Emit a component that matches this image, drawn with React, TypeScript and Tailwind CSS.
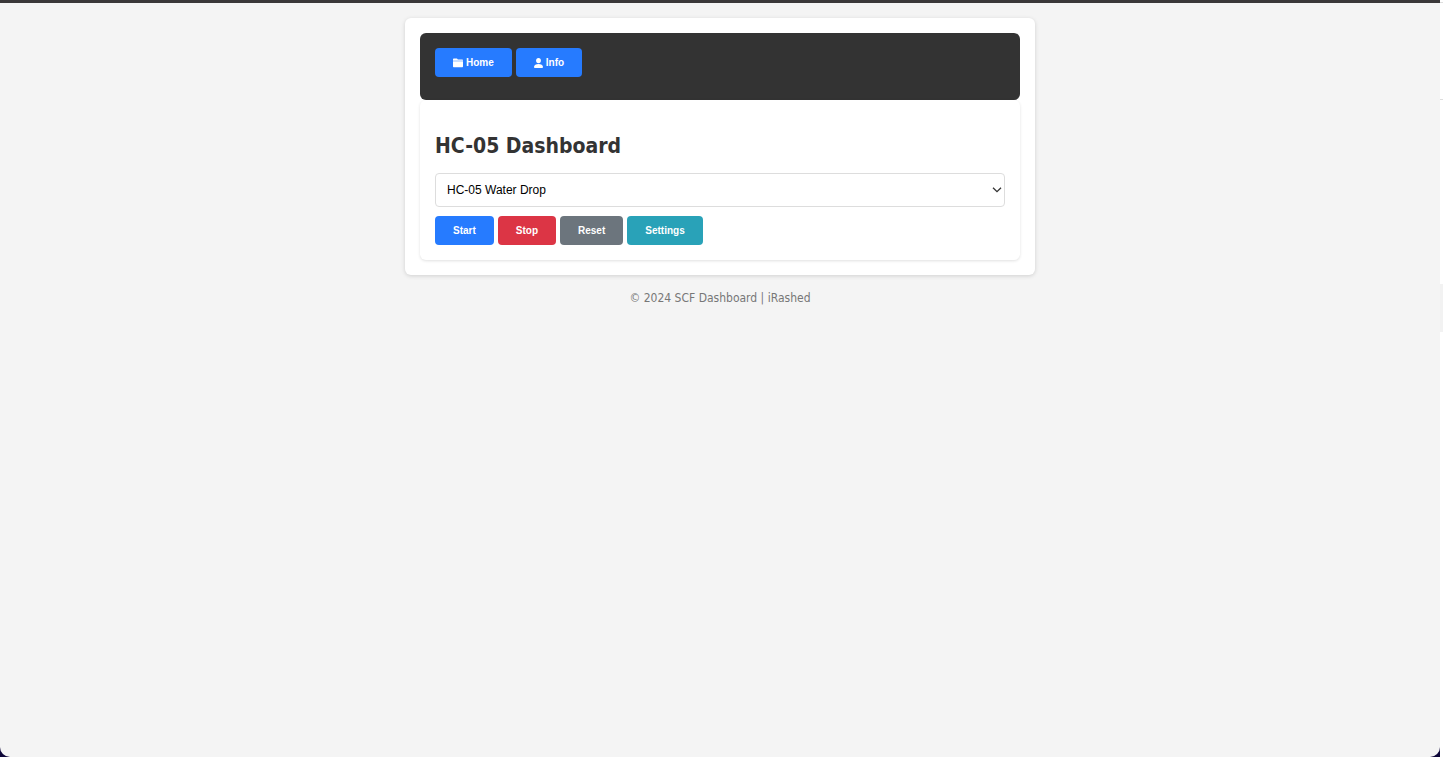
import { useState } from "react";
import type { ReactNode } from "react";

function FolderIcon() {
  return (
    <svg viewBox="0 0 10 10" className="h-[10px] w-[10px]" fill="currentColor" aria-hidden="true">
      <path d="M0 2.7V1.6C0 1 .4.6 1 .6h2.5c.4 0 .7.1.9.4l.5.5H9c.6 0 1 .4 1 1v.2z" />
      <path d="M0 3.3h10v5c0 .6-.4 1-1 1H1c-.6 0-1-.4-1-1z" />
    </svg>
  );
}

function PersonIcon() {
  return (
    <svg viewBox="0 0 9 10" className="h-[10px] w-[9px]" fill="currentColor" aria-hidden="true">
      <ellipse cx="4.5" cy="2.6" rx="2.4" ry="2.6" />
      <path d="M0 9C0 7.1 2 6 4.5 6S9 7.1 9 9c0 .6-.3 1-.9 1H.9C.3 10 0 9.6 0 9z" />
    </svg>
  );
}

function ActionButton({ color, children }: { color: string; children: ReactNode }) {
  return (
    <button
      type="button"
      className={`flex h-[29px] items-center gap-[3px] rounded-[4px] px-[18px] font-['Liberation_Sans',Arial,sans-serif] text-[10px] font-bold text-white ${color}`}
    >
      {children}
    </button>
  );
}

export default function App() {
  const [device, setDevice] = useState("water");

  return (
    <div className="flex min-h-screen bg-white pb-px font-['DejaVu_Sans_Condensed','DejaVu_Sans',sans-serif]">
      <div className="flex flex-1 flex-col bg-[#0d0638]">
        <div className="flex flex-1 flex-col items-center rounded-b-[10px] border-t-[3px] border-[#3a3839] bg-[#f4f4f4] pt-[15px]">
          <main className="w-full max-w-[630px] rounded-md bg-white p-[15px] shadow-[0_1px_4px_rgba(0,0,0,0.15)]">
            <nav className="flex gap-1 rounded-md bg-[#333333] px-[15px] pt-[15px] pb-[23px]">
              <ActionButton color="bg-[#267bff]">
                <FolderIcon />
                Home
              </ActionButton>
              <ActionButton color="bg-[#267bff]">
                <PersonIcon />
                Info
              </ActionButton>
            </nav>
            <section className="rounded-md px-[15px] pt-[30px] pb-[15px] shadow-[0_1px_3px_rgba(0,0,0,0.12)]">
              <h1 className="text-[21px] leading-8 font-bold text-[#333333]">HC-05 Dashboard</h1>
              <div className="relative mt-[11px]">
                <select
                  aria-label="Device"
                  value={device}
                  onChange={(event) => setDevice(event.target.value)}
                  className="block h-[34px] w-full appearance-none rounded-[4px] border border-[#dddddd] bg-white px-[11px] font-['Liberation_Sans',Arial,sans-serif] text-[12px] text-black"
                >
                  <option value="water">HC-05 Water Drop</option>
                </select>
                <svg
                  viewBox="0 0 10 6"
                  className="pointer-events-none absolute top-[14px] right-[3px] h-[6px] w-[10px]"
                  fill="none"
                  stroke="#333333"
                  strokeWidth="1.3"
                  aria-hidden="true"
                >
                  <path d="M1 0.7 5 4.7 9 0.7" />
                </svg>
              </div>
              <div className="mt-[9px] flex gap-1">
                <ActionButton color="bg-[#267bff]">Start</ActionButton>
                <ActionButton color="bg-[#dc3545]">Stop</ActionButton>
                <ActionButton color="bg-[#6c757d]">Reset</ActionButton>
                <ActionButton color="bg-[#29a2b8]">Settings</ActionButton>
              </div>
            </section>
          </main>
          <footer className="mt-[15px] text-[12px] leading-4 text-[#777777]">
            © 2024 SCF Dashboard | iRashed
          </footer>
        </div>
      </div>
      <div className="flex w-[3px] flex-col bg-white" aria-hidden="true">
        <div className="mt-[2px] h-[98px] border-y border-[#dddddd]" />
        <div className="mt-[184px] h-12 bg-[#f2f2f2]" />
      </div>
    </div>
  );
}
